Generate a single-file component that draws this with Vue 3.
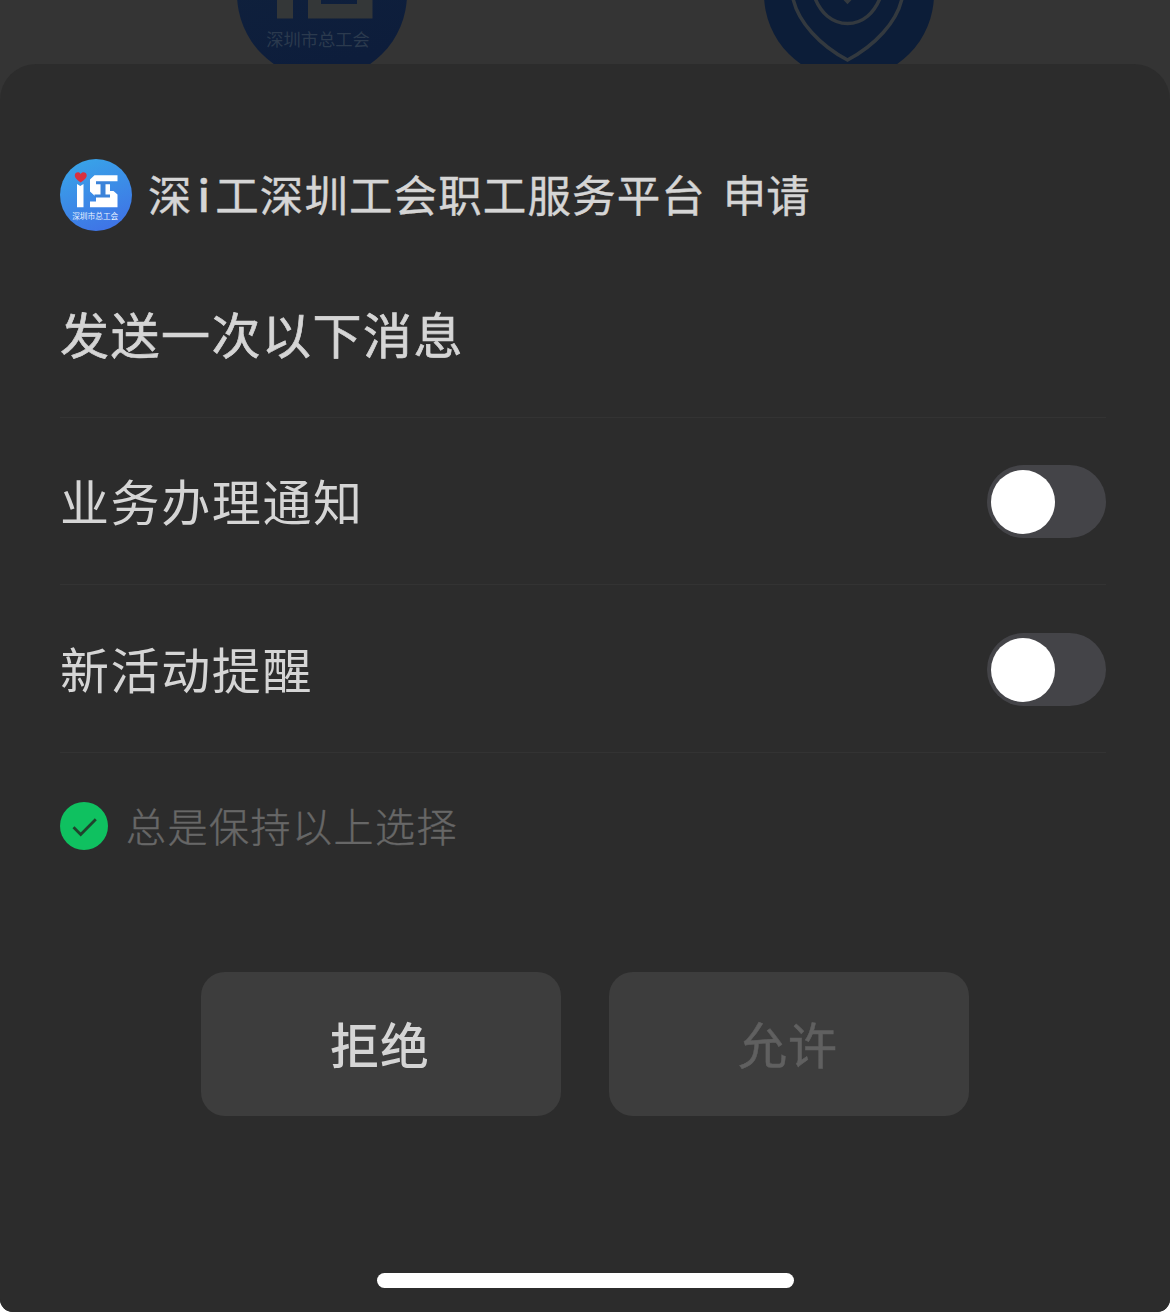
<script setup>
import { ref } from 'vue'

const messages = ref([
  { id: 1, label: '业务办理通知', enabled: false },
  { id: 2, label: '新活动提醒', enabled: false }
])

const keepChoice = ref(true)
</script>

<template>
  <div class="screen">
    <div class="backdrop">
      <svg class="backdrop-icon" width="172" height="64" viewBox="0 0 172 64">
        <defs>
          <linearGradient id="dimBlue" x1="0" y1="0" x2="0.3" y2="1">
            <stop offset="0" stop-color="#10223d" />
            <stop offset="1" stop-color="#0d1d3b" />
          </linearGradient>
        </defs>
        <circle cx="86" cy="-6" r="85" fill="url(#dimBlue)" />
        <path d="M41 0h16v18.5H41zM72 0h13v4h36V0h15.500v18.500H72z" fill="#343738" />
        <text x="82" y="45.500" class="dim-text">深圳市总工会</text>
      </svg>
      <svg class="backdrop-icon" width="172" height="64" viewBox="0 0 172 64">
        <circle cx="86" cy="-6" r="85" fill="#0c1d38" />
        <g fill="none" stroke="#33393f" stroke-width="3.500">
          <path d="M29.500 -4C34 22 58 46 84.500 60C111 46 135 22 139.500 -4" />
          <path d="M50.500 -6C57 14 70 23.500 84.500 23.500S112 14 118.500 -6" />
          <path d="M77 -7L84.500 1L92 -7" stroke-width="4.500" />
        </g>
      </svg>
    </div>

    <div class="sheet">
      <header class="app">
        <svg class="app-logo" width="72" height="72" viewBox="0 0 72 72">
          <defs>
            <linearGradient id="logoBlue" x1="0.2" y1="0" x2="0.6" y2="1">
              <stop offset="0" stop-color="#38a5e8" />
              <stop offset="1" stop-color="#3f74e6" />
            </linearGradient>
          </defs>
          <circle cx="36" cy="36" r="36" fill="url(#logoBlue)" />
          <path d="M17 25l3.300 2 3.200-2v23.300H17z" fill="#fff" />
          <path
            d="M20.700 23.500c-2.500-1.800-5.900-4.200-5.900-7 0-3.500 4.600-4.300 5.900-1.300 1.300-3 6-2.200 6 1.300 0 2.800-3.500 5.200-6 7z"
            fill="#d9303f"
          />
          <path
            d="M34.500 16.200h23v6H50V32h3.500l4 3.500v12.800H30v-5.800h6v-4.500L30 32.500V20.500z"
            fill="#fff"
          />
          <path d="M36 22.200h14v3h-4.500v10.300H50v3H34.500v-3h6V25.200H36z" fill="#3b83d9" />
          <text x="35.200" y="59.500" class="logo-text">深圳市总工会</text>
        </svg>
        <span class="app-name">深<span class="latin">i</span>工深圳工会职工服务平台</span>
        <span class="app-name request">申请</span>
      </header>

      <h1 class="title">发送一次以下消息</h1>

      <ul class="messages">
        <li v-for="item in messages" :key="item.id" class="message">
          <span class="label">{{ item.label }}</span>
          <button
            class="switch"
            :class="{ on: item.enabled }"
            role="switch"
            :aria-checked="item.enabled"
            @click="item.enabled = !item.enabled"
          ></button>
        </li>
      </ul>

      <div class="keep" @click="keepChoice = !keepChoice">
        <svg width="48" height="48" viewBox="0 0 48 48">
          <circle cx="24" cy="24" r="24" :fill="keepChoice ? '#0fc160' : '#555'" />
          <path d="M13.500 25.300l7.200 7.200L35.800 17.300" fill="none" stroke="#20432d" stroke-width="2.800" />
        </svg>
        <span class="label">总是保持以上选择</span>
      </div>

      <div class="actions">
        <button class="action">拒绝</button>
        <button class="action" disabled>允许</button>
      </div>

      <div class="home-indicator"></div>
    </div>
  </div>
</template>

<style>
body {
  margin: 0;
  background: #fff;
}
</style>

<style scoped>
.screen {
  width: 1170px;
  height: 1312px;
  display: flex;
  flex-direction: column;
  overflow: hidden;
  border-radius: 0 0 13px 13px;
  background: #343434;
  font-family: 'Noto Sans CJK SC', sans-serif;
  color: #d5d5d5;
}

.backdrop {
  display: grid;
  grid-template-columns: 1fr 1fr;
  justify-items: center;
  height: 64px;
  padding: 0 58px;
}

.backdrop-icon {
  display: block;
}

.dim-text {
  font-size: 17.3px;
  text-anchor: middle;
  fill: #2b3a4e;
}

.logo-text {
  font-size: 7.7px;
  text-anchor: middle;
  fill: #e6f2ff;
}

.sheet {
  flex: 1;
  display: flex;
  flex-direction: column;
  box-sizing: border-box;
  padding: 95px 64px 24px 60px;
  border-radius: 36px 36px 0 0;
  background: #2c2c2c;
}

.app {
  display: flex;
  align-items: center;
  height: 72px;
}

.app-name {
  margin-left: 16px;
  padding-bottom: 2px;
  font-size: 43.5px;
  line-height: 70px;
  letter-spacing: 1.1px;
  -webkit-text-stroke: 0.4px currentColor;
}

.app-name.request {
  margin-left: 17px;
  letter-spacing: 0;
}

.latin {
  margin: 0 4px 0 5px;
  font-weight: 500;
}

.title {
  margin: 64px 0 0;
  height: 122px;
  line-height: 76px;
  font-size: 49px;
  font-weight: 400;
  letter-spacing: 1.5px;
  -webkit-text-stroke: 0.7px currentColor;
}

.messages {
  margin: 0;
  padding: 0;
  list-style: none;
  border-bottom: 1px solid #333;
}

.message {
  display: flex;
  align-items: center;
  justify-content: space-between;
  box-sizing: border-box;
  height: 167px;
  border-top: 1px solid #333;
  font-size: 49px;
  letter-spacing: 1.6px;
}

.message:last-child {
  height: 168px;
  padding-top: 1px;
}

.message .label {
  padding-bottom: 3px;
}

.switch {
  width: 119px;
  height: 73px;
  padding: 5px 4px;
  border: none;
  border-radius: 37px;
  background: #444448;
  cursor: pointer;
}

.switch::before {
  content: '';
  display: block;
  width: 64px;
  height: 64px;
  border-radius: 50%;
  background: #fff;
}

.switch.on {
  background: #0fc160;
}

.switch.on::before {
  margin-left: auto;
}

.keep {
  display: flex;
  align-items: center;
  gap: 18px;
  height: 48px;
  margin-top: 49px;
  color: #676767;
  font-size: 40px;
  font-weight: 300;
  letter-spacing: 1.5px;
  -webkit-text-stroke: 0.4px currentColor;
}

.keep .label {
  padding-bottom: 3px;
}

.actions {
  display: flex;
  gap: 48px;
  margin: 122px 0 0 141px;
}

.action {
  width: 360px;
  height: 144px;
  padding: 0 2px 3px 0;
  border: none;
  border-radius: 24px;
  background: #3d3d3d;
  color: #d5d5d5;
  font-family: inherit;
  font-size: 49px;
  font-weight: 500;
  letter-spacing: 1px;
}

.action:disabled {
  color: #606060;
  font-weight: 400;
  -webkit-text-stroke: 0.5px currentColor;
}

.home-indicator {
  width: 417px;
  height: 15px;
  margin: auto 0 0 317px;
  border-radius: 8px;
  background: #fff;
}
</style>
